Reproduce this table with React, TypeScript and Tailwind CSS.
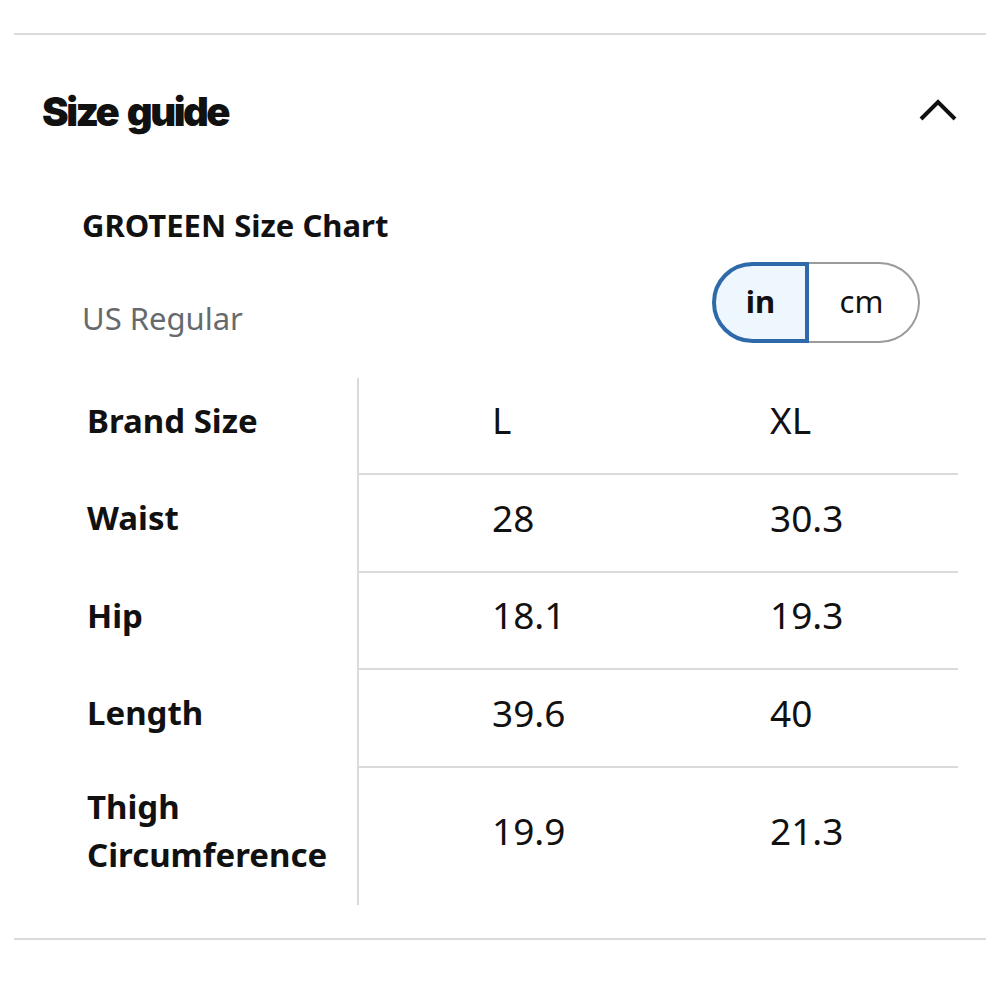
import React from "react";

const rows: { label: React.ReactNode; a: string; b: string; h: string }[] = [
  { label: "Brand Size", a: "L", b: "XL", h: "h-[97px]" },
  { label: "Waist", a: "28", b: "30.3", h: "h-[98px]" },
  { label: "Hip", a: "18.1", b: "19.3", h: "h-[97px]" },
  { label: "Length", a: "39.6", b: "40", h: "h-[98px]" },
  {
    label: (
      <>
        Thigh
        <br />
        Circumference
      </>
    ),
    a: "19.9",
    b: "21.3",
    h: "h-[137px]",
  },
];

export default function App() {
  return (
    <div className="w-[1000px] h-[1000px] bg-white px-[14px] pt-[33px] text-[#111]" style={{ fontFamily: "'Noto Sans', sans-serif" }}>
      <div className="h-[2px] bg-[#d8dadc]" />
      <div className="flex items-center justify-between pl-[28px] pr-[28px] pt-[55px]">
        <h2
          className="text-[40px] leading-[44px] font-black tracking-[-2.5px] [word-spacing:4px] text-[#111]"
          style={{ fontFamily: "Inter, 'Liberation Sans', sans-serif" }}
        >
          Size guide
        </h2>
        <svg width="40" height="26" viewBox="0 0 40 26" className="mt-[-4px]">
          <path d="M3 22 L20 5 L37 22" fill="none" stroke="#111" strokeWidth="4" strokeLinejoin="miter" />
        </svg>
      </div>

      <div className="pl-[68px] pr-[66px] pt-[71px]">
        <div className="text-[31px] leading-[40px] font-bold text-[#111]">GROTEEN Size Chart</div>
        <div className="mt-[17px] flex items-end justify-between">
          <div className="mb-[5px] text-[31px] leading-[40px] text-[#666a6d]">US Regular</div>
          <div className="flex h-[81px] w-[208px]">
            <button className="flex w-[97px] items-center justify-center rounded-l-full border-[4px] border-[#2e6aa9] bg-[#eef7fe] pb-[3px] text-[31px] font-bold text-[#111]">
              in
            </button>
            <button className="flex flex-1 items-center justify-center rounded-r-full border-2 border-l-0 border-[#9b9b9b] bg-white pb-[3px] pr-[4px] text-[31px] text-[#111]">
              cm
            </button>
          </div>
        </div>
      </div>

      <div className="ml-[68px] mt-[35px] grid w-[876px] grid-cols-[275px_278px_323px]">
        {rows.map((r, i) => {
          const last = i === rows.length - 1;
          return (
            <React.Fragment key={i}>
              <div className={`${r.h} flex items-center pb-[12px] pl-[5px] text-[33px] leading-[48px] font-bold text-[#111]`}>{r.label}</div>
              <div
                className={`${r.h} flex items-center border-l-2 border-[#d8dadc] pb-[11px] pl-[133px] text-[37px] text-[#111] ${last ? "" : "border-b-2"}`}
              >
                {r.a}
              </div>
              <div className={`${r.h} flex items-center border-[#d8dadc] pb-[11px] pl-[135px] text-[37px] text-[#111] ${last ? "" : "border-b-2"}`}>
                {r.b}
              </div>
            </React.Fragment>
          );
        })}
      </div>

      <div className="mt-[33px] h-[2px] bg-[#d8dadc]" />
    </div>
  );
}
